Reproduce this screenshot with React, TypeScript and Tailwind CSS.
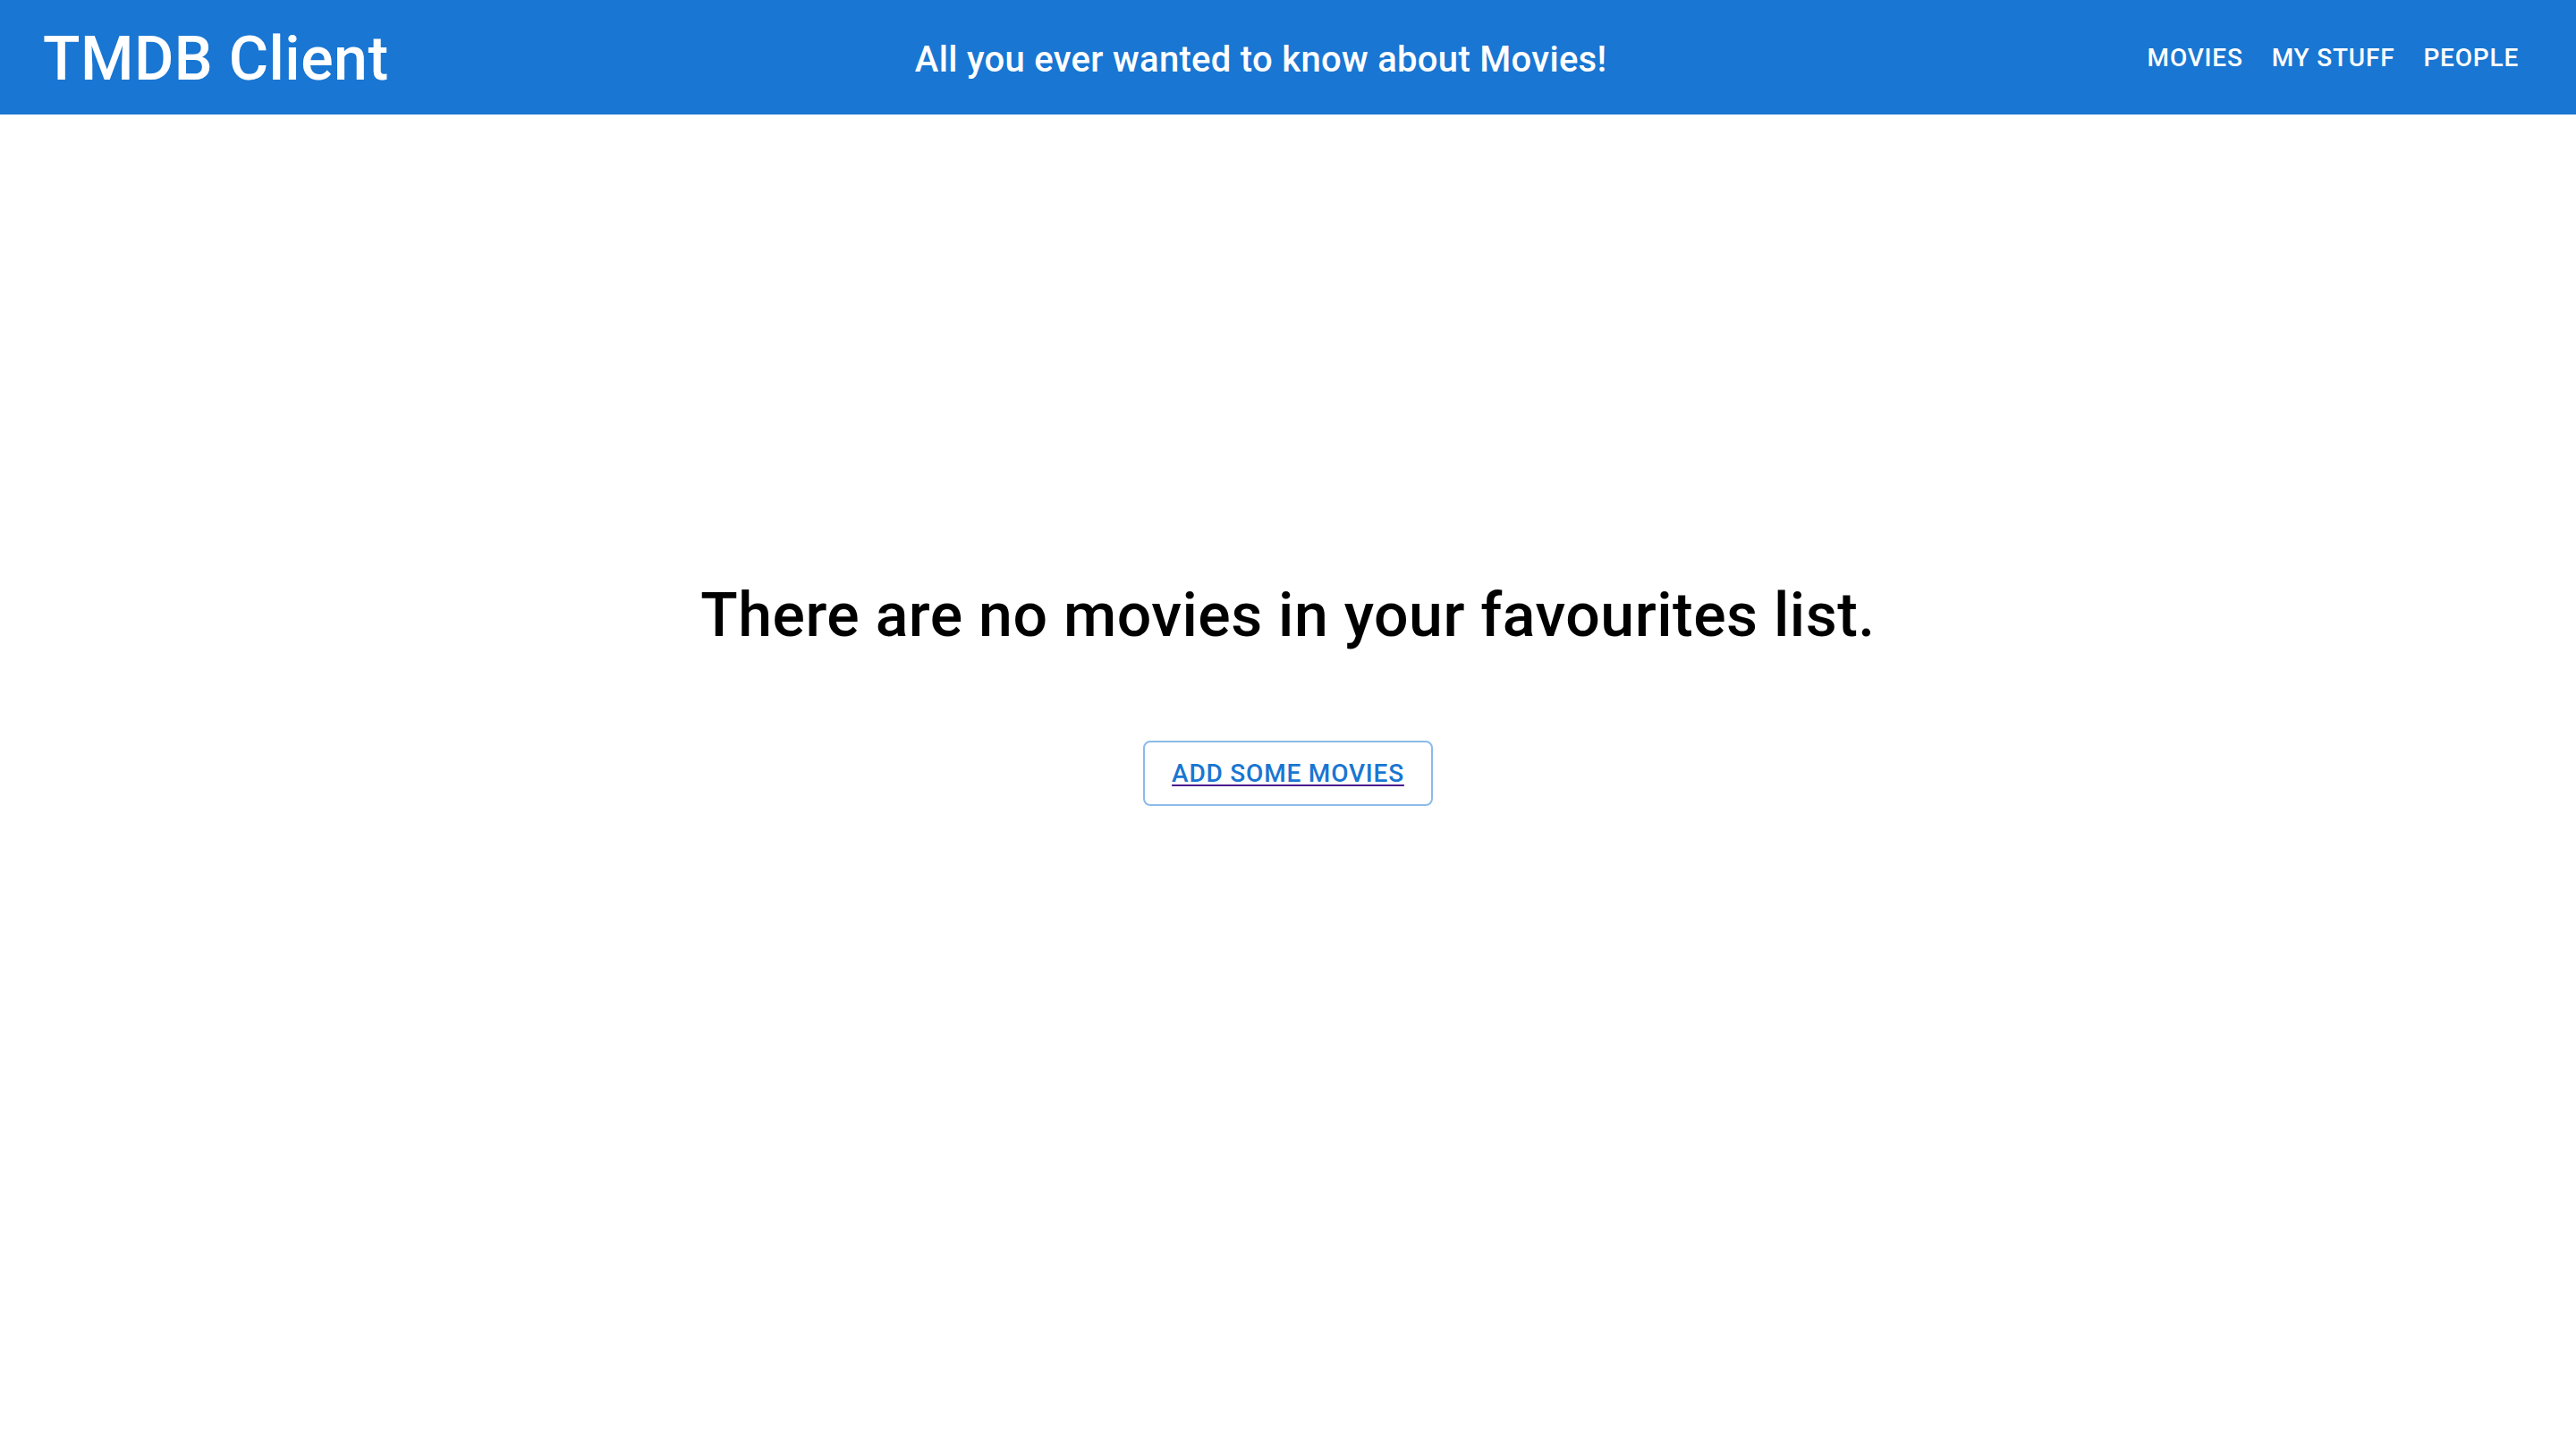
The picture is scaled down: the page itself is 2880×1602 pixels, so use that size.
import React from 'react'

const navItems = ['Movies', 'My Stuff', 'People']

function Header() {
  return (
    <header className="bg-[#1976d2] text-white">
      <div className="flex h-[128px] items-center px-[48px]">
        <h1 className="mt-[6px] grow text-[68px] font-medium leading-[1.235] tracking-[0.5px]">TMDB Client</h1>
        <h2 className="mt-[6px] grow text-[40px] font-medium leading-[1.6] tracking-[0.3px]">
          All you ever wanted to know about Movies!
        </h2>
        <nav className="flex items-center">
          {navItems.map((item) => (
            <button
              key={item}
              className="min-w-[128px] rounded-[8px] px-[16px] py-[12px] text-[28px] font-medium uppercase leading-[1.75] tracking-[0.8px]"
            >
              {item}
            </button>
          ))}
        </nav>
      </div>
    </header>
  )
}

export default function App() {
  return (
    <div className="min-h-screen bg-white font-['Roboto','Helvetica','Arial',sans-serif]">
      <Header />
      <main className="flex flex-col items-center pt-[519px]">
        <h3 className="text-[68px] font-medium leading-[1.235] tracking-[0.5px] text-black">
          There are no movies in your favourites list.
        </h3>
        <button className="mt-[97px] rounded-[8px] border-2 border-[#8cbbe9] px-[30px] py-[10px] text-[28px] font-medium uppercase leading-[1.75] tracking-[0.8px]">
          <a href="#" className="text-[#4b1a8f] underline decoration-[2px] underline-offset-[3px]">
            <span className="text-[#1976d2]">Add some movies</span>
          </a>
        </button>
      </main>
    </div>
  )
}
